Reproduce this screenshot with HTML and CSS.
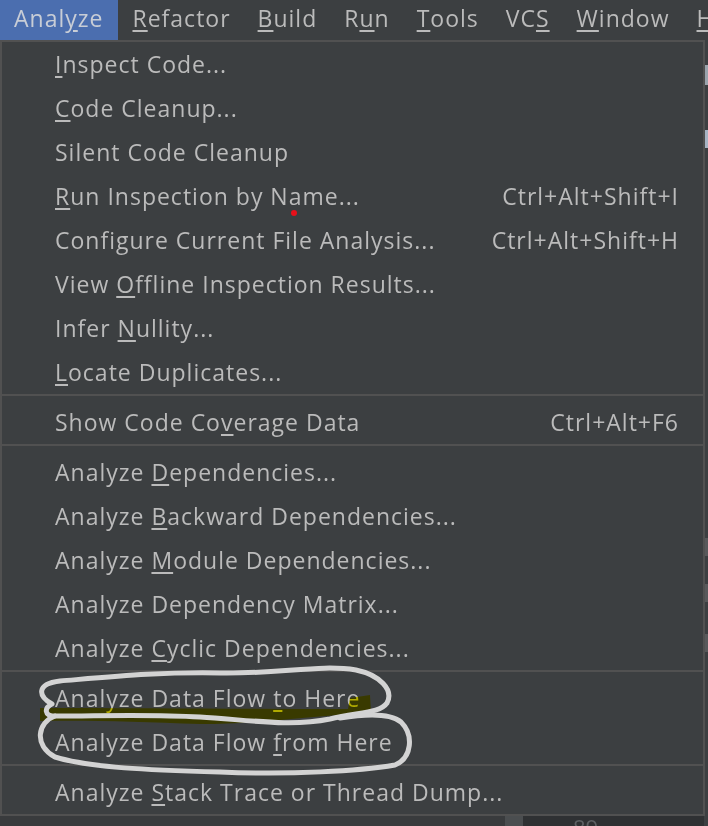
FILE: index.html
```html
<!DOCTYPE html>
<html>
<head>
<meta charset="utf-8">
<link rel="stylesheet" href="styles.css">
</head>
<body>
<div class="menubar">
  <div class="mitem active">Anal<u>y</u>ze</div>
  <div class="mitem"><u>R</u>efactor</div>
  <div class="mitem"><u>B</u>uild</div>
  <div class="mitem">R<u>u</u>n</div>
  <div class="mitem"><u>T</u>ools</div>
  <div class="mitem">VC<u>S</u></div>
  <div class="mitem"><u>W</u>indow</div>
  <div class="mitem"><u>H</u>elp</div>
</div>
<div class="editor">
  <div class="gutter"></div>
  <div class="stripe"></div>
  <div class="code"><span class="lineno">89</span></div>
  <div class="scroll">
    <div class="mark m1"></div>
    <div class="mark m2"></div>
    <div class="mark m3"></div>
    <div class="mark m4"></div>
    <div class="mark m5"></div>
  </div>
</div>
<div class="popup">
  <div class="row"><span><u>I</u>nspect Code...</span></div>
  <div class="row"><span><u>C</u>ode Cleanup...</span></div>
  <div class="row"><span>Silent Code Cleanup</span></div>
  <div class="row"><span><u>R</u>un Inspection by Name...</span><span class="key">Ctrl+Alt+Shift+I</span></div>
  <div class="row"><span>Configure Current File Analysis...</span><span class="key">Ctrl+Alt+Shift+H</span></div>
  <div class="row"><span>View <u>O</u>ffline Inspection Results...</span></div>
  <div class="row"><span>Infer <u>N</u>ullity...</span></div>
  <div class="row"><span><u>L</u>ocate Duplicates...</span></div>
  <div class="sep"></div>
  <div class="row"><span>Show Code Co<u>v</u>erage Data</span><span class="key">Ctrl+Alt+F6</span></div>
  <div class="sep"></div>
  <div class="row"><span>Analyze <u>D</u>ependencies...</span></div>
  <div class="row"><span>Analyze <u>B</u>ackward Dependencies...</span></div>
  <div class="row"><span>Analyze <u>M</u>odule Dependencies...</span></div>
  <div class="row"><span>Analyze Dependency Matrix...</span></div>
  <div class="row"><span>Analyze <u>C</u>yclic Dependencies...</span></div>
  <div class="sep"></div>
  <div class="row"><span>Analyze Data Flow <u>t</u>o Here</span></div>
  <div class="row"><span>Analyze Data Flow <u>f</u>rom Here</span></div>
  <div class="sep"></div>
  <div class="row"><span>Analyze <u>S</u>tack Trace or Thread Dump...</span></div>
</div>
<svg class="annot" width="708" height="826" viewBox="0 0 708 826">
  <path class="hl" d="M40 708 C150 708 250 709 348 709 L350 698 L370 695 L371 712 C300 718 250 724 200 724 C140 722 90 720 40 721 Z"/>
  <path class="loop" d="M52 704 C38 696 36 684 60 681 C120 676 160 672 220 673 C280 674 320 664 356 670 C380 675 394 690 387 703 C380 713 360 712 330 719 C290 727 250 720 200 717 C150 714 100 716 55 716 C44 716 44 708 52 704"/>
  <path class="loop" d="M55 716 C38 722 33 745 55 757 C90 768 150 770 220 772 C290 775 360 771 395 765 C412 758 414 735 401 722 C390 713 365 714 340 718"/>
  <circle cx="294" cy="213" r="3" fill="#e8101a"/>
</svg>
</body>
</html>
```
FILE: styles.css
```css
html, body {
  margin: 0;
  padding: 0;
}
body {
  width: 708px;
  height: 826px;
  overflow: hidden;
  background: #2b2b2b;
  font-family: "Open Sans", "Noto Sans", sans-serif;
  color: #bbbbbb;
  position: relative;
}
u {
  text-decoration: underline;
  text-decoration-thickness: 2px;
  text-underline-offset: 3px;
}
.menubar {
  height: 40px;
  background: #3c3f41;
  display: flex;
  font-size: 23px;
  letter-spacing: 1px;
  line-height: 36px;
  overflow: hidden;
}
.mitem {
  padding: 0 13px 0 14px;
  white-space: nowrap;
}
.mitem.active {
  background: #4b6eaf;
  color: #c8cdd6;
  padding-right: 15px;
}
.editor {
  height: 786px;
  display: grid;
  grid-template-columns: 505px 18px 1fr 4px;
}
.gutter { background: #393b3d; }
.stripe { background: #4b4e50; }
.code {
  background: #2f3133;
  display: flex;
  flex-direction: column;
  justify-content: flex-end;
  padding-left: 50px;
}
.lineno {
  font-size: 22px;
  color: #5d6063;
  line-height: 22px;
  margin-bottom: -12px;
}
.scroll {
  background: #3c3f41;
  display: flex;
  flex-direction: column;
}
.mark { width: 4px; background: #9aa4ad; }
.m1 { height: 20px; margin-top: 25px; }
.m2 { height: 18px; margin-top: 45px; background: #a7b4c4; }
.m3 { height: 18px; margin-top: 390px; background: #58595b; }
.m4 { height: 18px; margin-top: 28px; background: #58595b; }
.m5 { height: 18px; margin-top: 32px; background: #58595b; }
.popup {
  position: absolute;
  left: 0;
  top: 40px;
  width: 705px;
  box-sizing: border-box;
  border: 2px solid #515151;
  background: #3c3f41;
  font-size: 23px;
  letter-spacing: 1px;
}
.row {
  height: 44px;
  display: flex;
  justify-content: space-between;
  align-items: center;
  padding: 0 24px 0 53px;
  white-space: nowrap;
}
.sep {
  height: 2px;
  background: #515151;
  margin-bottom: 4px;
}
.annot {
  position: absolute;
  left: 0;
  top: 0;
  pointer-events: none;
}
.hl {
  fill: #f2ea00;
  mix-blend-mode: multiply;
}
.loop {
  fill: none;
  stroke: #d3d3d3;
  stroke-width: 5;
  stroke-linecap: round;
  stroke-linejoin: round;
}
```
